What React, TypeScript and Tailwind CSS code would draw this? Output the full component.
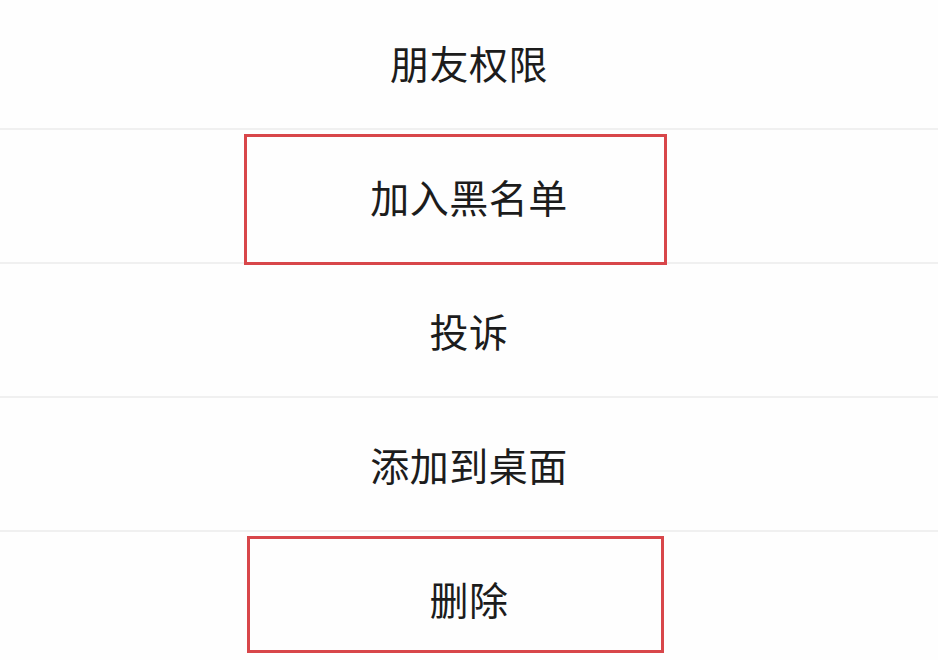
const items = [
  { label: "朋友权限", marked: false },
  { label: "加入黑名单", marked: true },
  { label: "投诉", marked: false },
  { label: "添加到桌面", marked: false },
  { label: "删除", marked: true },
];

export default function App() {
  return (
    <div
      className="w-[938px] h-[660px] overflow-hidden bg-[#fefefe] text-[#1c1c1c]"
      style={{ fontFamily: '"Noto Sans CJK SC", "Noto Sans", sans-serif' }}
    >
      <div className="-mt-[4px] flex flex-col">
        {items.map((item, i) => (
          <div
            key={item.label}
            className="relative h-[134px] flex items-center justify-center border-b-2 border-[#f0f0f0]"
          >
            <span className="text-[39px] leading-none tracking-[0.5px]">{item.label}</span>
            {item.marked && i === 1 && (
              <div className="absolute left-[244px] top-[4px] w-[423px] h-[131px] border-[3px] border-[#d8464a]" />
            )}
            {item.marked && i === 4 && (
              <div className="absolute left-[247px] top-[4px] w-[417px] h-[117px] border-[3px] border-[#d8464a]" />
            )}
          </div>
        ))}
      </div>
    </div>
  );
}
